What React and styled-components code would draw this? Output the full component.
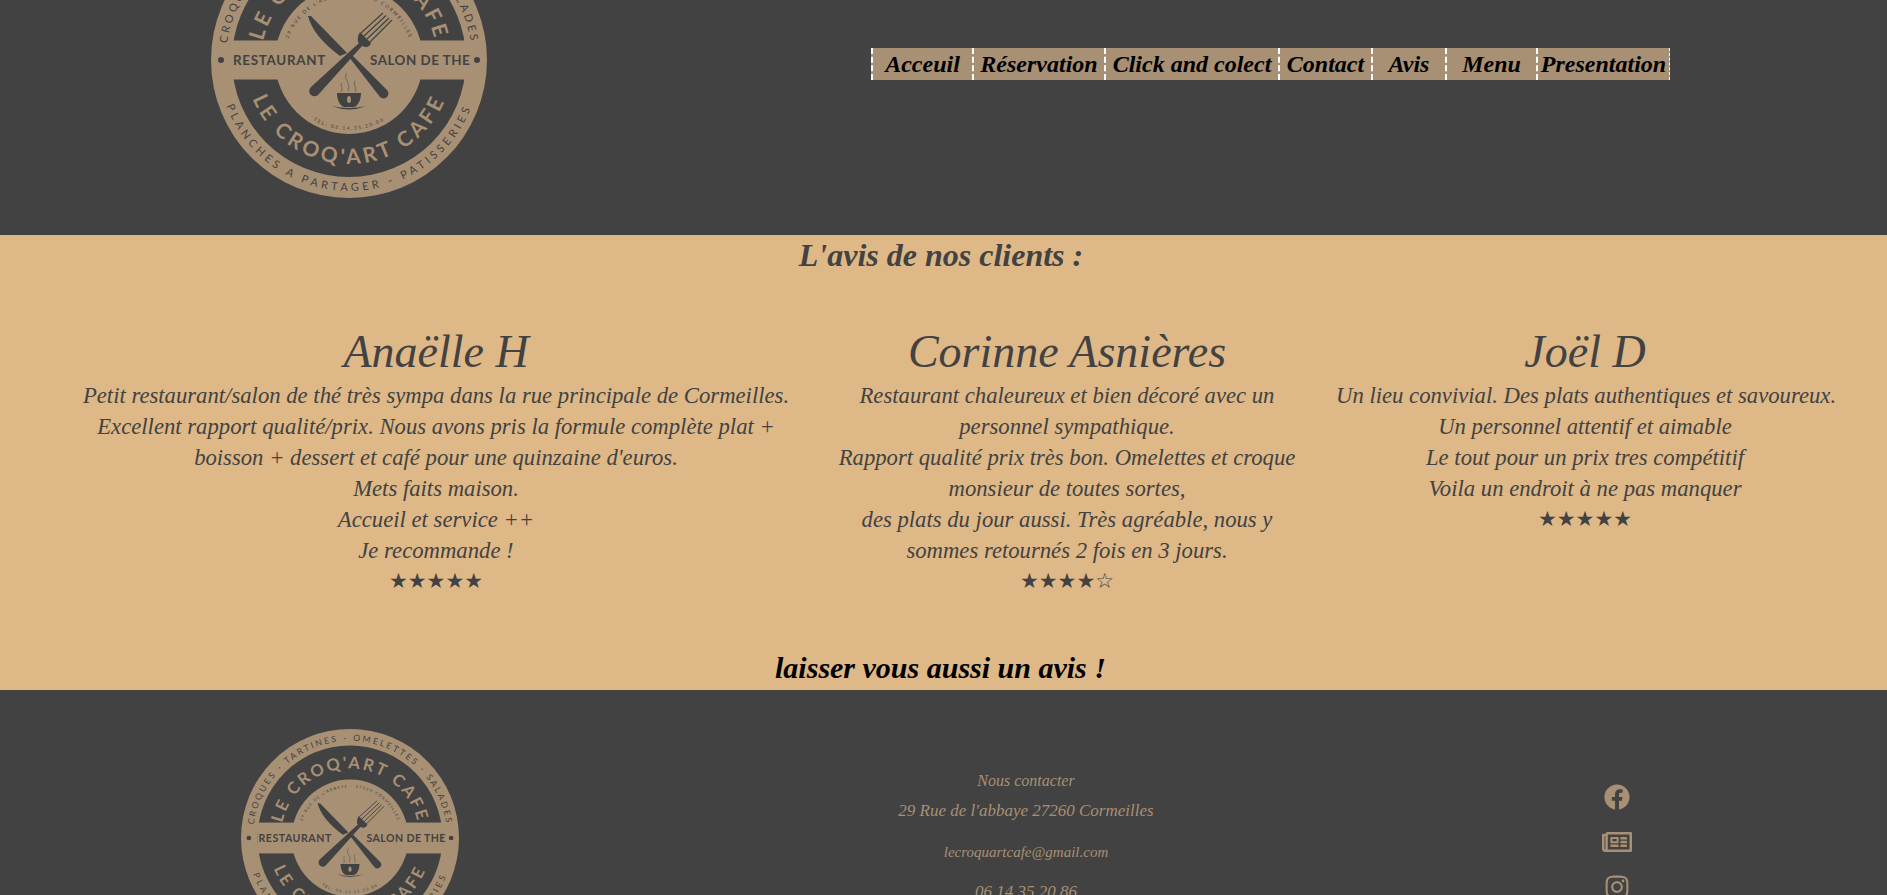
import React from 'react';
import styled, { createGlobalStyle } from 'styled-components';
import { FaFacebook, FaRegNewspaper, FaInstagram } from 'react-icons/fa';

const dark = '#424242';
const tan = '#a89074';
const sand = '#deb887';
const script = `"Liberation Serif", serif`;

const Global = createGlobalStyle`
html, body {
  margin: 0;
  padding: 0;
  overflow: hidden;
  background-color: ${dark};
  font-family: ${script};
  font-style: italic;
}
`

const Page = styled.div`
height: 895px;
overflow: hidden;
`

const Header = styled.header`
height: 235px;
display: flex;
overflow: hidden;
background-color: ${dark};
`

const HeaderLogo = styled.div`
width: 698px;
margin-top: -78px;
display: flex;
justify-content: center;
`

const Nav = styled.nav`
display: flex;
height: 32px;
margin: 48px 0 0 173px;
background-color: ${tan};
border-right: 1px dashed white;
`

const NavItem = styled.a`
width: ${p => p.$w}px;
box-sizing: border-box;
display: flex;
align-items: center;
justify-content: center;
border-left: 2px dashed white;
color: black;
font-size: 24px;
font-weight: bold;
white-space: nowrap;
`

const Main = styled.main`
height: 455px;
box-sizing: border-box;
display: flex;
flex-direction: column;
background-color: ${sand};
color: ${dark};
`

const Title = styled.h2`
margin: 0;
height: 39px;
line-height: 41px;
padding-right: 5px;
font-size: 32px;
font-weight: bold;
text-align: center;
`

const Reviews = styled.div`
display: flex;
gap: 35px;
margin-top: 50px;
padding-left: 74px;
`

const Review = styled.article`
width: ${p => p.$w}px;
text-align: center;
`

const Name = styled.h3`
margin: 0;
height: 56px;
line-height: 56px;
font-size: 46px;
font-weight: normal;
`

const Line = styled.div`
height: 31px;
line-height: 31px;
font-size: 22.7px;
white-space: nowrap;
`

const Stars = styled.div`
height: 31px;
line-height: 31px;
font-family: "DejaVu Sans", sans-serif;
font-style: normal;
font-size: 21px;
`

const Leave = styled.a`
margin-top: auto;
height: 40px;
line-height: 36px;
padding-right: 6px;
color: black;
font-size: 30px;
font-weight: bold;
text-align: center;
`

const Footer = styled.footer`
display: grid;
grid-template-columns: 700px 652px 530px;
height: 205px;
overflow: hidden;
background-color: ${dark};
`

const FooterLogo = styled.div`
display: flex;
justify-content: center;
padding-top: 39px;
`

const Contact = styled.div`
padding-top: 76px;
text-align: center;
color: ${tan};
`

const ContactLine = styled.div`
height: 30px;
line-height: 30px;
margin-top: ${p => p.$gap || 0}px;
font-size: ${p => p.$size || 17}px;
white-space: nowrap;
`

const Socials = styled.div`
display: flex;
flex-direction: column;
align-items: center;
gap: 17px;
padding-top: 94px;
color: ${tan};
font-size: 26px;
`

const LogoSvg = styled.svg`
flex: none;
display: block;
`

const LogoText = styled.text`
font-family: Lato, "Liberation Sans", sans-serif;
font-style: normal;
font-weight: ${p => p.$weight || 700};
font-size: ${p => p.$size}px;
letter-spacing: ${p => p.$spacing || 0}px;
fill: ${p => p.$fill};
`

const Logo = ({ size, id }) => (
    <LogoSvg width={size} height={size} viewBox="-138 -138 276 276">
        <defs>
            <path id={`${id}-outer-top`} d="M-123,0 A123,123 0 0 1 123,0" />
            <path id={`${id}-outer-bottom`} d="M-131,0 A131,131 0 0 0 131,0" />
            <path id={`${id}-ring-top`} d="M-88,0 A88,88 0 0 1 88,0" />
            <path id={`${id}-ring-bottom`} d="M-104,0 A104,104 0 0 0 104,0" />
            <path id={`${id}-small-top`} d="M-64,0 A64,64 0 0 1 64,0" />
            <path id={`${id}-small-bottom`} d="M-70,0 A70,70 0 0 0 70,0" />
        </defs>
        <circle r="138" fill={tan} />
        <circle r="117" fill={dark} />
        <circle r="74" fill={tan} />
        <rect x="-117" y="-19.5" width="234" height="39" fill={tan} />

        <LogoText $size={11} $spacing={2.8} $weight={400} $fill={dark} textAnchor="middle">
            <textPath href={`#${id}-outer-top`} startOffset="50%">CROQUES - TARTINES - OMELETTES - SALADES</textPath>
        </LogoText>
        <LogoText $size={11} $spacing={3.7} $weight={400} $fill={dark} textAnchor="middle">
            <textPath href={`#${id}-outer-bottom`} startOffset="50%">PLANCHES A PARTAGER - PATISSERIES</textPath>
        </LogoText>
        <LogoText $size={21} $spacing={3} $fill={tan} textAnchor="middle">
            <textPath href={`#${id}-ring-top`} startOffset="50%">LE CROQ'ART CAFE</textPath>
        </LogoText>
        <LogoText $size={21} $spacing={3.6} $fill={tan} textAnchor="middle">
            <textPath href={`#${id}-ring-bottom`} startOffset="50%">LE CROQ'ART CAFE</textPath>
        </LogoText>
        <LogoText $size={5} $spacing={1.6} $weight={400} $fill={dark} textAnchor="middle">
            <textPath href={`#${id}-small-top`} startOffset="50%">29 RUE DE L'ABBAYE - 27260 CORMEILLES</textPath>
        </LogoText>
        <LogoText $size={5} $spacing={1.6} $weight={400} $fill={dark} textAnchor="middle">
            <textPath href={`#${id}-small-bottom`} startOffset="50%">TEL: 06.14.35.20.86</textPath>
        </LogoText>

        <LogoText x="-116" y="5" $size={13.4} $spacing={0.7} $fill={dark}>RESTAURANT</LogoText>
        <LogoText x="21" y="5" $size={13.4} $spacing={0.5} $fill={dark}>SALON DE THE</LogoText>
        <circle cx="-128" cy="0" r="3" fill={dark} />
        <circle cx="128" cy="0" r="3" fill={dark} />

        {/* couteau */}
        <path d="M-41,-44 L-38,-44 L-2,-7 L-9,-4 Q-36,-24 -41,-44 Z M0,-3 L3,-5 L38,30 A4.8,4.8 0 0 1 31,37 Z" fill={dark} />
        {/* fourchette */}
        <path d="M-38,27 L10,-17 L13,-14 L-31,35 A5,5 0 0 1 -38,27 Z M11,-28 L22,-17 Q20,-11 13,-14 L9,-18 Q8,-23 11,-28 Z" fill={dark} />
        <path d="M12,-27 L34,-47 M15,-24 L37,-44.5 M18,-21 L40,-42 M21,-18 L43,-40" stroke={dark} strokeWidth="1.2" />
        {/* tasse */}
        <path d="M-12,33 H12 C12,41 8,47 4,47 H-4 C-8,47 -12,41 -12,33 Z M-17,46 Q0,53 17,46 Q0,50 -17,46 Z" fill={dark} />
        <ellipse cx="0" cy="39.5" rx="2" ry="3.5" fill={tan} />
        <path d="M-2,13 C-7,19 3,22 -1,31 M-7,23 C-10,26 -5,28 -8,32 M6,21 C3,25 9,27 6,32" stroke="#7d7262" strokeWidth="1.3" fill="none" />
    </LogoSvg>
);

const links = [
    ['Acceuil', 101], ['Réservation', 132], ['Click and colect', 174], ['Contact', 93],
    ['Avis', 74], ['Menu', 91], ['Presentation', 133],
];

const reviews = [
    {
        name: 'Anaëlle H', w: 724, stars: '★★★★★',
        lines: [
            'Petit restaurant/salon de thé très sympa dans la rue principale de Cormeilles.',
            'Excellent rapport qualité/prix. Nous avons pris la formule complète plat +',
            "boisson + dessert et café pour une quinzaine d'euros.",
            'Mets faits maison.',
            'Accueil et service ++',
            'Je recommande !',
        ],
    },
    {
        name: 'Corinne Asnières', w: 468, stars: '★★★★☆',
        lines: [
            'Restaurant chaleureux et bien décoré avec un',
            'personnel sympathique.',
            'Rapport qualité prix très bon. Omelettes et croque',
            'monsieur de toutes sortes,',
            'des plats du jour aussi. Très agréable, nous y',
            'sommes retournés 2 fois en 3 jours.',
        ],
    },
    {
        name: 'Joël D', w: 498, stars: '★★★★★',
        lines: [
            'Un lieu convivial. Des plats authentiques et savoureux.',
            'Un personnel attentif et aimable',
            'Le tout pour un prix tres compétitif',
            'Voila un endroit à ne pas manquer',
        ],
    },
];

const App = () => {
    return (
        <>
        <Global />
        <Page>
            <Header>
                <HeaderLogo>
                    <Logo size={276} id="top" />
                </HeaderLogo>
                <Nav>
                    {links.map(([label, w]) => <NavItem key={label} $w={w}>{label}</NavItem>)}
                </Nav>
            </Header>

            <Main>
                <Title>L'avis de nos clients :</Title>
                <Reviews>
                    {reviews.map(r => (
                        <Review key={r.name} $w={r.w}>
                            <Name>{r.name}</Name>
                            {r.lines.map(l => <Line key={l}>{l}</Line>)}
                            <Stars>{r.stars}</Stars>
                        </Review>
                    ))}
                </Reviews>
                <Leave>laisser vous aussi un avis !</Leave>
            </Main>

            <Footer>
                <FooterLogo>
                    <Logo size={218} id="bottom" />
                </FooterLogo>
                <Contact>
                    <ContactLine $size={16}>Nous contacter</ContactLine>
                    <ContactLine>29 Rue de l'abbaye 27260 Cormeilles</ContactLine>
                    <ContactLine $size={15} $gap={11}>lecroquartcafe@gmail.com</ContactLine>
                    <ContactLine $gap={10}>06 14 35 20 86</ContactLine>
                </Contact>
                <Socials>
                    <FaFacebook />
                    <FaRegNewspaper size={30} />
                    <FaInstagram />
                </Socials>
            </Footer>
        </Page>
        </>
    )
}
export default App;
